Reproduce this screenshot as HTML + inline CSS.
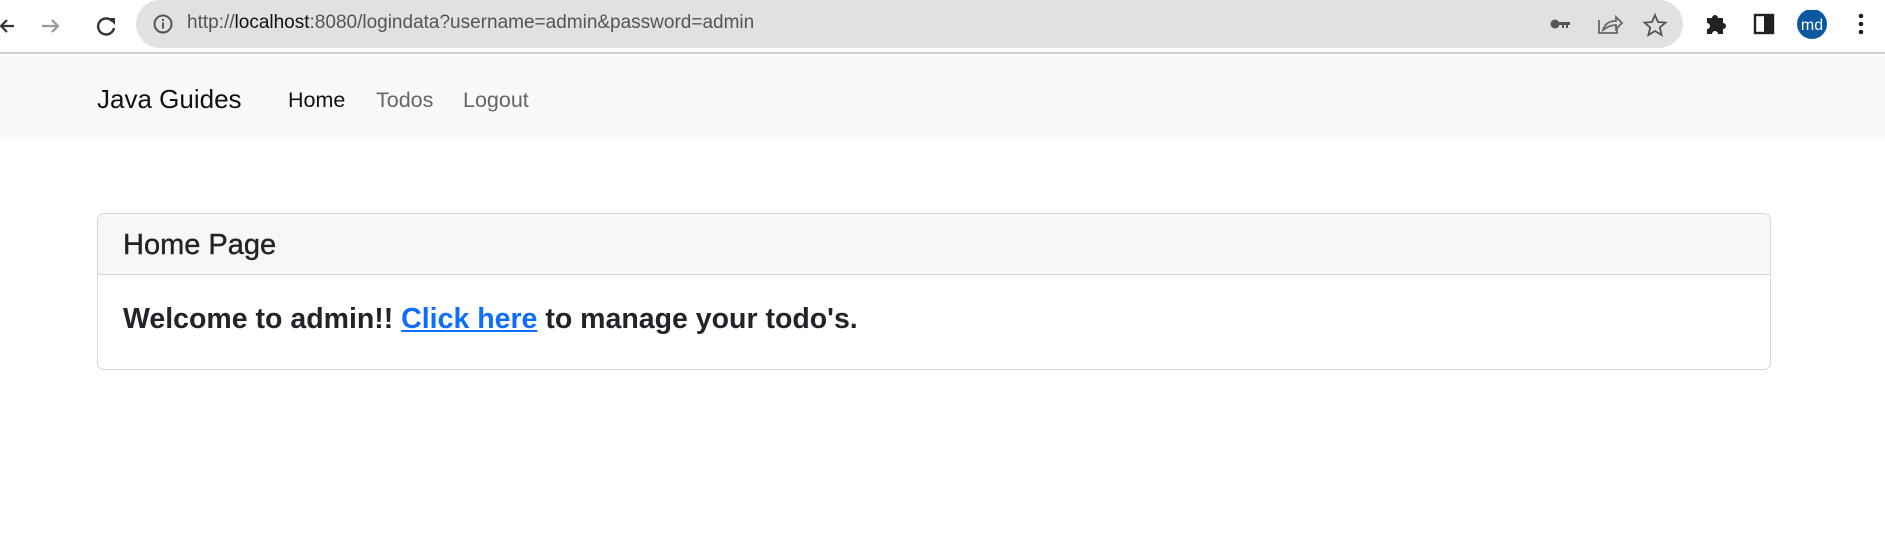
<!DOCTYPE html>
<html><head><meta charset="utf-8"><style>
*{box-sizing:border-box;margin:0;padding:0}
body{width:1885px;height:538px;background:#fff;font-family:"Liberation Sans",sans-serif;position:relative;overflow:hidden}
.tb{position:absolute;left:0;top:0;width:1885px;height:54px;background:#fff;border-bottom:2px solid #cfcfcf}
.pill{position:absolute;left:136px;top:0;width:1547px;height:48px;background:#e1e1e1;border-radius:24px}
.url{position:absolute;left:187px;top:12px;font-size:19px;color:#555}
.url b{font-weight:normal;color:#111}
.nav{position:absolute;left:0;top:56px;width:1885px;height:83px;background:#f8f9fa}
.brand{position:absolute;left:97px;top:28px;font-size:26px;color:#111}
.nl{position:absolute;top:32px;font-size:21.5px;color:#666}
.card{position:absolute;left:97px;top:213px;width:1674px;height:157px;border:1px solid #d6d6d6;border-radius:7px;overflow:hidden}
.ch{height:61px;background:#f7f7f7;border-bottom:1px solid #d6d6d6;padding:15px 0 0 25px;font-size:29px;color:#212529;-webkit-text-stroke:0.4px #212529}
.cb{padding:28px 0 0 25px;font-size:28.5px;font-weight:bold;color:#212529}
.cb a{color:#0d6efd;text-decoration:underline}
</style></head><body>
<div class="tb">
<svg style="position:absolute;left:0;top:12px" width="120" height="28" viewBox="0 0 120 28">
<path d="M14 14H1M7 8l-6 6 6 6" stroke="#333" stroke-width="2.2" fill="none"/>
<path d="M42 14h16M52 8l6 6-6 6" stroke="#999" stroke-width="2.2" fill="none"/>
<path d="M112 9a8 8 0 1 0 2 7" stroke="#333" stroke-width="2.4" fill="none"/><path d="M108 6h7v7z" fill="#333"/>
</svg>
<div class="pill"></div>
<svg style="position:absolute;left:152px;top:13px" width="22" height="22" viewBox="0 0 22 22"><circle cx="11" cy="11" r="8.5" stroke="#555" stroke-width="2" fill="none"/><rect x="10" y="9.5" width="2" height="6" fill="#555"/><rect x="10" y="6" width="2" height="2" fill="#555"/></svg>
<div class="url">http://<b>localhost</b>:8080/logindata?username=admin&amp;password=admin</div>
<svg style="position:absolute;left:1548px;top:12px" width="130" height="26" viewBox="0 0 130 26">
<circle cx="7" cy="12" r="4.5" fill="#555"/><path d="M10 10h12v3h-2v3h-2v-3h-2v3h-2v-3h-4z" fill="#555"/>
<path d="M51 8v13h18v-5" stroke="#666" stroke-width="1.8" fill="none"/><path d="M55 18c2-7 7-9 13-9V5l6 6-6 6v-4c-5 0-9 2-13 5z" stroke="#666" stroke-width="1.8" fill="none"/>
<path d="M107 3l3 7 7.5.6-5.7 5 1.8 7.4-6.6-4-6.6 4 1.8-7.4-5.7-5 7.5-.6z" stroke="#555" stroke-width="1.8" fill="none"/>
</svg>
<svg style="position:absolute;left:1705px;top:10px" width="180" height="30" viewBox="0 0 180 30">
<path d="M2 8h5a3 3 0 0 1 6 0h5v5a3 3 0 0 1 0 6v5h-5a3 3 0 0 0-6 0H2v-5a3 3 0 0 0 0-6z" fill="#202124"/>
<rect x="50" y="5" width="18" height="18" fill="none" stroke="#202124" stroke-width="2.4"/><rect x="59" y="5" width="9" height="18" fill="#202124"/>
<circle cx="107" cy="14" r="15" fill="#0b57a0"/><text x="107" y="20" text-anchor="middle" font-family="Liberation Sans,sans-serif" font-size="16" fill="#fff">md</text>
<circle cx="156" cy="6" r="2.3" fill="#202124"/><circle cx="156" cy="14" r="2.3" fill="#202124"/><circle cx="156" cy="22" r="2.3" fill="#202124"/>
</svg>
</div>
<div class="nav">
<div class="brand">Java Guides</div>
<div class="nl" style="left:288px;color:#111">Home</div>
<div class="nl" style="left:376px">Todos</div>
<div class="nl" style="left:463px">Logout</div>
</div>
<div class="card">
<div class="ch">Home Page</div>
<div class="cb">Welcome to admin!! <a>Click here</a> to manage your todo's.</div>
</div>
</body></html>
